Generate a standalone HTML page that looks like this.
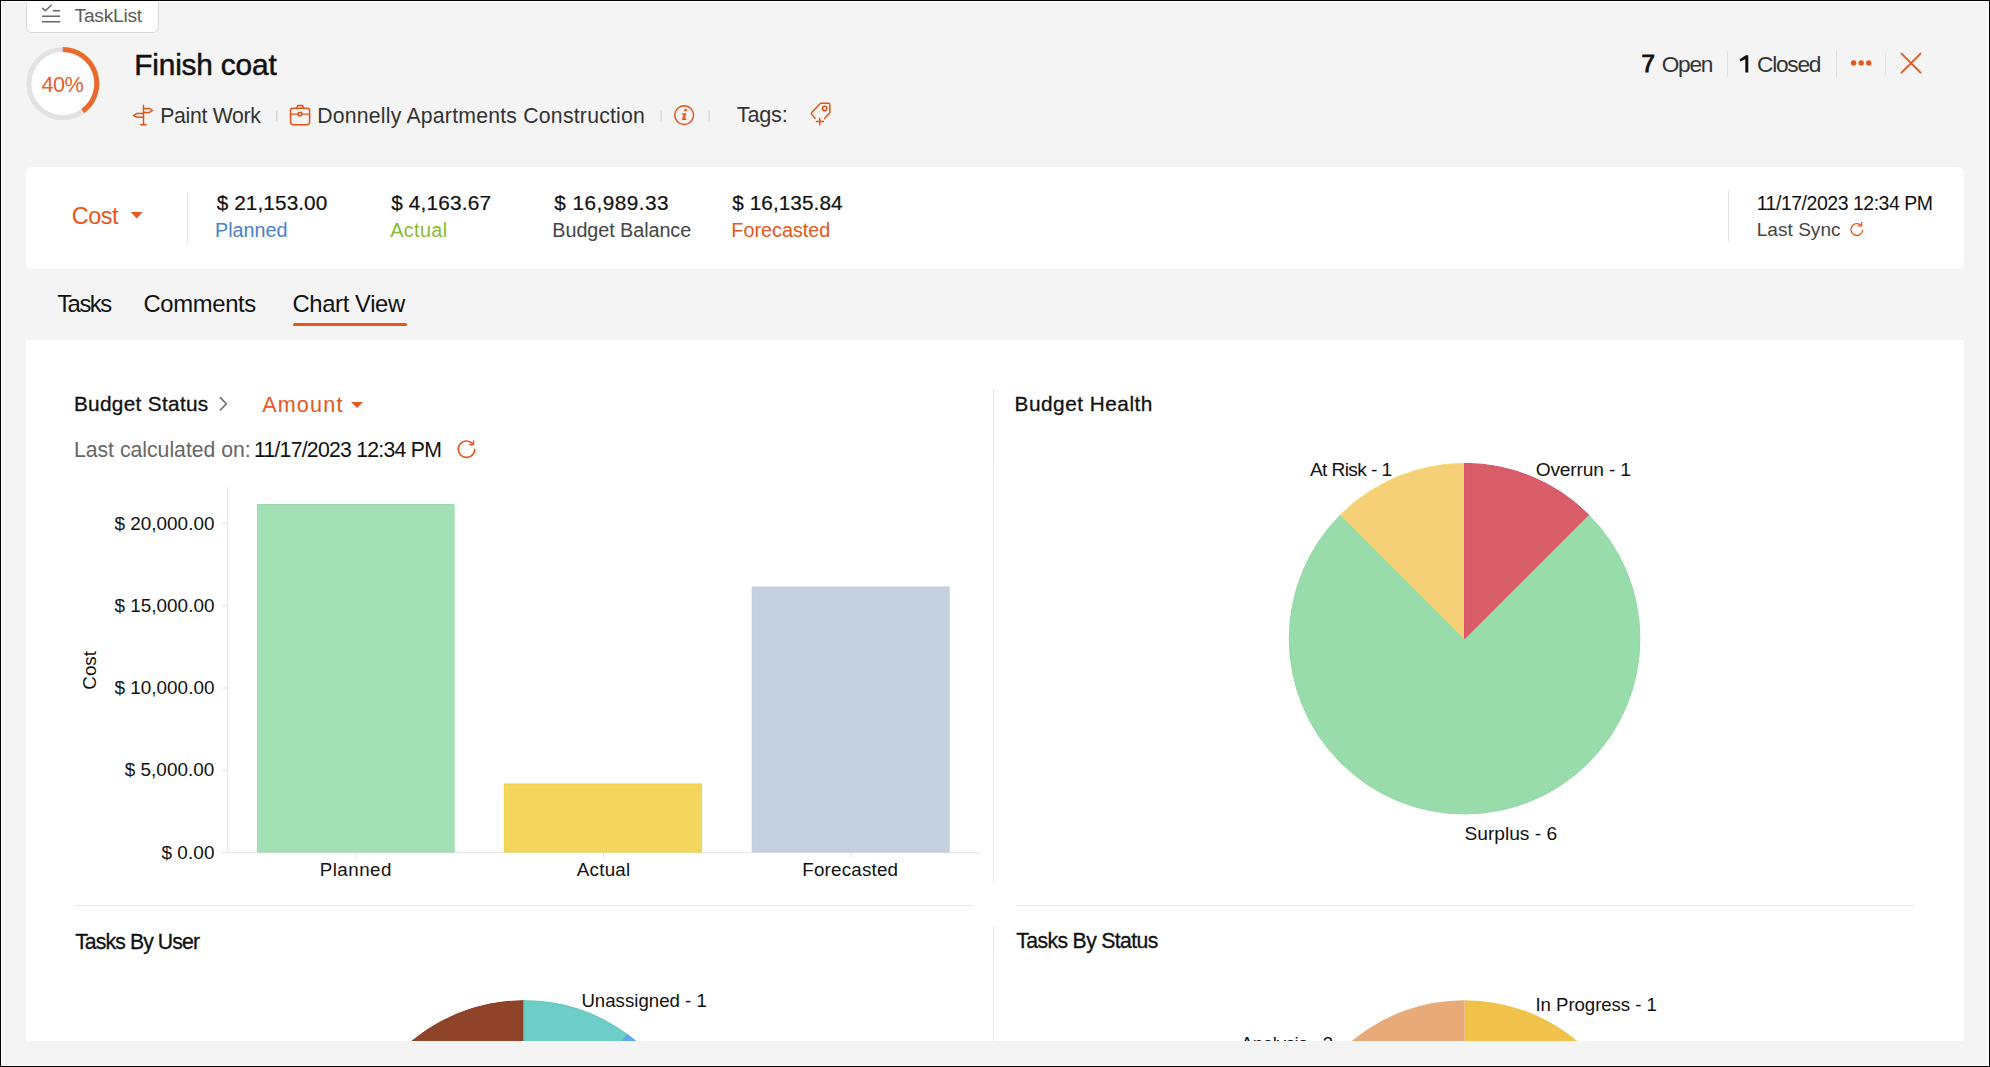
<!DOCTYPE html>
<html><head><meta charset="utf-8"><style>
html,body{margin:0;padding:0;width:1990px;height:1067px;overflow:hidden;background:#f4f4f4;}
body{position:relative;font-family:"Liberation Sans",sans-serif;}
.t{position:absolute;white-space:pre;}
.ab{position:absolute;}
</style></head><body>
<div style="position:absolute;left:26px;top:-8px;width:132.5px;height:41px;background:#fff;border:1px solid #d9d9d9;border-radius:6px;box-sizing:border-box"></div>
<svg class="ab" style="left:0;top:0" width="80" height="40"><g stroke="#666" stroke-width="1.5" fill="none" stroke-linecap="round" stroke-linejoin="round">
<path d="M42.6 8.2 L45.3 10.8 L51.3 5.2"/><path d="M53.4 10.7 H59.6"/><path d="M42.6 16.2 H59.6"/><path d="M42.6 21.8 H59.6"/></g></svg>
<div class="t" style="left:74.60px;top:6.46px;font-size:19.19px;line-height:19.19px;color:#5c5c5c;letter-spacing:-0.264px;">TaskList</div>
<svg class="ab" style="left:0;top:0" width="120" height="130">
<circle cx="62.8" cy="83.6" r="36.5" fill="#fff"/>
<circle cx="62.8" cy="83.6" r="34" fill="none" stroke="#e2e2e2" stroke-width="5"/>
<path d="M62.80 49.60 A34 34 0 0 1 82.78 111.11" fill="none" stroke="#ea6a2e" stroke-width="5"/>
</svg>
<div class="t" style="left:41.45px;top:73.77px;font-size:21.66px;line-height:21.66px;color:#e8602a;letter-spacing:-0.525px;">40%</div>
<div class="t" style="left:134.25px;top:49.88px;font-size:29.80px;line-height:29.80px;color:#111;letter-spacing:-0.165px;-webkit-text-stroke:0.5px #111;">Finish coat</div>
<svg class="ab" style="left:0;top:0" width="900" height="140"><g stroke="#e65012" stroke-width="1.45" fill="none" stroke-linecap="round" stroke-linejoin="round">
<path d="M143.5 105.3 V124.6 M140.7 124.7 H146.1"/>
<path d="M143.5 108.4 H149.4 L152.5 110.5 L149.4 112.4 H143.5"/>
<path d="M143.5 113.5 H136.7 L133.6 115.5 L136.7 117.2 H143.5"/>
<rect x="290.5" y="108.2" width="19.1" height="16.5" rx="2.6"/>
<path d="M296.7 108.2 L298 105.4 H302.5 L303.7 108.2"/>
<path d="M290.5 114.1 H298.3 M302 114.1 H309.6"/>
<rect x="298.3" y="112.4" width="3.4" height="3.3" rx="0.6"/>
<circle cx="684.2" cy="115.1" r="9.4"/>
<path d="M815.2 118.4 L811.6 114.2 Q810.9 113.3 811.7 112.4 L820.6 103.2 H828.6 Q829.9 103.4 829.9 104.8 V112.1 Q829.8 112.8 829.2 113.4 L824.5 118.4"/>
<circle cx="824.6" cy="108.5" r="2.2"/>
<path d="M819.8 118.4 V124.7 M816.4 121.5 H823.3"/>
</g>
<g fill="#e8561c"><circle cx="685.5" cy="110.2" r="1.35"/>
<path d="M682 113.2 H686.4 L684.8 118.6 H686.6 L686.2 120.1 H681.9 L683.4 114.6 H681.7 Z"/></g>
<g fill="#d2d2d2"><rect x="276" y="110.5" width="1.2" height="10.5"/><rect x="660.5" y="110.5" width="1.2" height="10.5"/><rect x="708.5" y="110.5" width="1.2" height="10.5"/></g>
</svg>
<div class="t" style="left:160.15px;top:105.14px;font-size:21.22px;line-height:21.22px;color:#333;letter-spacing:-0.294px;">Paint Work</div>
<div class="t" style="left:317.15px;top:105.14px;font-size:21.22px;line-height:21.22px;color:#333;letter-spacing:0.224px;">Donnelly Apartments Construction</div>
<div class="t" style="left:736.85px;top:103.97px;font-size:21.66px;line-height:21.66px;color:#333;letter-spacing:-0.212px;">Tags:</div>
<div class="t" style="left:1641.60px;top:52.48px;font-size:24.13px;line-height:24.13px;color:#111;letter-spacing:0.000px;-webkit-text-stroke:1.0px #111;">7</div>
<div class="t" style="left:1661.70px;top:53.31px;font-size:22.67px;line-height:22.67px;color:#333;letter-spacing:-1.267px;">Open</div>
<div class="ab" style="left:1727px;top:51px;width:1px;height:26px;background:#e0e0e0"></div>
<svg class="ab" style="left:1730px;top:50px" width="24" height="28"><path d="M15.9 5.2 H18.3 V22.6 H15.3 V9.2 L10.2 11.6 L9.6 9.2 Z" fill="#111"/></svg>
<div class="t" style="left:1757.00px;top:53.31px;font-size:22.67px;line-height:22.67px;color:#333;letter-spacing:-1.220px;">Closed</div>
<div class="ab" style="left:1836px;top:51px;width:1px;height:26px;background:#e0e0e0"></div>
<svg class="ab" style="left:1840px;top:50px" width="90" height="30">
<g fill="#e8561c"><circle cx="13.6" cy="12.9" r="2.7"/><circle cx="21.2" cy="12.9" r="2.7"/><circle cx="28.7" cy="12.9" r="2.7"/></g>
<g stroke="#e8561c" stroke-width="2" stroke-linecap="round"><path d="M61.5 3.6 L80.5 22.6 M80.5 3.6 L61.5 22.6"/></g></svg>
<div class="ab" style="left:1885px;top:53px;width:1px;height:23px;background:#e0e0e0"></div>
<div class="ab" style="left:26px;top:167px;width:1938px;height:102px;background:#fff;border-radius:6px"></div>
<div class="t" style="left:71.85px;top:204.59px;font-size:23.40px;line-height:23.40px;color:#e8561c;letter-spacing:-0.517px;">Cost</div>
<svg class="ab" style="left:128px;top:208px" width="20" height="14"><path d="M2.7 4 H14.6 L8.65 10.5 Z" fill="#e8561c"/></svg>
<div class="ab" style="left:186.5px;top:192px;width:1px;height:52px;background:#e4e4e4"></div>
<div class="t" style="left:216.75px;top:192.81px;font-size:20.78px;line-height:20.78px;color:#111;letter-spacing:0.085px;-webkit-text-stroke:0.2px #111;">$ 21,153.00</div>
<div class="t" style="left:214.95px;top:220.77px;font-size:19.77px;line-height:19.77px;color:#4a7fc6;letter-spacing:0.017px;">Planned</div>
<div class="t" style="left:391.15px;top:192.81px;font-size:20.78px;line-height:20.78px;color:#111;letter-spacing:0.194px;-webkit-text-stroke:0.2px #111;">$ 4,163.67</div>
<div class="t" style="left:390.25px;top:220.77px;font-size:19.77px;line-height:19.77px;color:#86bb38;letter-spacing:0.380px;">Actual</div>
<div class="t" style="left:554.15px;top:192.81px;font-size:20.78px;line-height:20.78px;color:#111;letter-spacing:0.465px;-webkit-text-stroke:0.2px #111;">$ 16,989.33</div>
<div class="t" style="left:552.35px;top:220.77px;font-size:19.77px;line-height:19.77px;color:#444;letter-spacing:-0.058px;">Budget Balance</div>
<div class="t" style="left:732.20px;top:192.81px;font-size:20.78px;line-height:20.78px;color:#111;letter-spacing:0.075px;-webkit-text-stroke:0.2px #111;">$ 16,135.84</div>
<div class="t" style="left:731.30px;top:220.77px;font-size:19.77px;line-height:19.77px;color:#e8561c;letter-spacing:0.011px;">Forecasted</div>
<div class="ab" style="left:1728px;top:191px;width:1px;height:50px;background:#e4e4e4"></div>
<div class="t" style="left:1756.70px;top:193.61px;font-size:19.48px;line-height:19.48px;color:#111;letter-spacing:-0.469px;">11/17/2023 12:34 PM</div>
<div class="t" style="left:1756.70px;top:219.98px;font-size:19.04px;line-height:19.04px;color:#444;letter-spacing:0.038px;">Last Sync</div>
<svg class="ab" style="left:1840px;top:216px" width="30" height="30"><g stroke="#e8561c" stroke-width="1.4" fill="none" stroke-linecap="round" stroke-linejoin="round">
<path d="M22.6 14.5 A5.9 5.9 0 1 1 21.2 9.6"/><path d="M21.6 6.4 V9.9 H18.2"/></g></svg>
<div class="t" style="left:57.20px;top:291.82px;font-size:23.84px;line-height:23.84px;color:#111;letter-spacing:-1.487px;">Tasks</div>
<div class="t" style="left:143.50px;top:291.82px;font-size:23.84px;line-height:23.84px;color:#111;letter-spacing:-0.357px;">Comments</div>
<div class="t" style="left:292.55px;top:291.82px;font-size:23.84px;line-height:23.84px;color:#111;letter-spacing:-0.389px;">Chart View</div>
<div class="ab" style="left:293px;top:323px;width:114px;height:3px;background:#e8561c;border-radius:1.5px"></div>
<div class="ab" style="left:26px;top:340px;width:1938px;height:701px;background:#fff"></div>
<div class="t" style="left:73.90px;top:394.11px;font-size:20.78px;line-height:20.78px;color:#111;letter-spacing:0.325px;-webkit-text-stroke:0.3px #111;">Budget Status</div>
<svg class="ab" style="left:210px;top:390px" width="30" height="30"><path d="M10.3 7.6 L16.4 13.8 L10.3 20" stroke="#666" stroke-width="1.5" fill="none" stroke-linecap="round" stroke-linejoin="round"/></svg>
<div class="t" style="left:262.15px;top:393.52px;font-size:21.60px;line-height:21.60px;color:#e8561c;letter-spacing:1.170px;">Amount</div>
<svg class="ab" style="left:340px;top:395px" width="30" height="20"><path d="M11 7 H23 L17 13 Z" fill="#e8561c"/></svg>
<div class="t" style="left:73.95px;top:439.34px;font-size:21.22px;line-height:21.22px;color:#666;letter-spacing:-0.008px;">Last calculated on:</div>
<div class="t" style="left:253.95px;top:439.34px;font-size:21.22px;line-height:21.22px;color:#111;letter-spacing:-0.747px;">11/17/2023 12:34 PM</div>
<svg class="ab" style="left:452px;top:436px" width="30" height="30"><g stroke="#e8561c" stroke-width="1.6" fill="none" stroke-linecap="round" stroke-linejoin="round">
<path d="M22.7 13.4 A8.2 8.2 0 1 1 20.6 7.7"/><path d="M21.5 5 V8.6 H17.9"/></g></svg>
<div class="ab" style="left:993px;top:389px;width:1px;height:76px;background:#e4e4e4"></div>
<div class="ab" style="left:993px;top:465px;width:1px;height:419px;background:#ececec"></div>
<svg class="ab" style="left:0;top:0" width="1000" height="900"><g fill="#e6e6e6"><rect x="227" y="487" width="1" height="366"/><rect x="222" y="852" width="758" height="1"/></g><rect x="222" y="852.0" width="5" height="1" fill="#e6e6e6"/><rect x="222" y="769.8" width="5" height="1" fill="#e6e6e6"/><rect x="222" y="687.5" width="5" height="1" fill="#e6e6e6"/><rect x="222" y="605.2" width="5" height="1" fill="#e6e6e6"/><rect x="222" y="523.0" width="5" height="1" fill="#e6e6e6"/><rect x="355.8" y="853" width="1" height="5" fill="#e6e6e6"/><rect x="603.0" y="853" width="1" height="5" fill="#e6e6e6"/><rect x="850.6" y="853" width="1" height="5" fill="#e6e6e6"/><rect x="257.5" y="504.53" width="196.60000000000002" height="347.47" fill="#a3e0b5" stroke="#99dcab" stroke-width="1"/><rect x="504.4" y="784.01" width="197.10000000000002" height="67.99" fill="#f5d65c" stroke="#f4cf3e" stroke-width="1"/><rect x="752.2" y="587.07" width="196.89999999999998" height="264.93" fill="#c5d1de" stroke="#bccadb" stroke-width="1"/></svg>
<div class="t" style="left:161.45px;top:843.61px;font-size:18.90px;line-height:18.90px;color:#111;letter-spacing:0.090px;">$ 0.00</div>
<div class="t" style="left:124.65px;top:761.36px;font-size:18.90px;line-height:18.90px;color:#111;letter-spacing:0.050px;">$ 5,000.00</div>
<div class="t" style="left:114.60px;top:679.11px;font-size:18.90px;line-height:18.90px;color:#111;letter-spacing:0.000px;">$ 10,000.00</div>
<div class="t" style="left:114.60px;top:596.86px;font-size:18.90px;line-height:18.90px;color:#111;letter-spacing:0.000px;">$ 15,000.00</div>
<div class="t" style="left:114.60px;top:514.61px;font-size:18.90px;line-height:18.90px;color:#111;letter-spacing:0.000px;">$ 20,000.00</div>
<div class="t" style="left:319.63px;top:860.93px;font-size:18.75px;line-height:18.75px;color:#111;letter-spacing:0.500px;">Planned</div>
<div class="t" style="left:576.75px;top:860.93px;font-size:18.75px;line-height:18.75px;color:#111;letter-spacing:0.270px;">Actual</div>
<div class="t" style="left:802.35px;top:860.93px;font-size:18.75px;line-height:18.75px;color:#111;letter-spacing:0.200px;">Forecasted</div>
<div class="t" style="left:70.70px;top:660.63px;font-size:18.75px;line-height:18.75px;color:#111;letter-spacing:0.000px;transform:rotate(-90deg);transform-origin:center;">Cost</div>
<div class="t" style="left:1014.55px;top:393.91px;font-size:20.78px;line-height:20.78px;color:#111;letter-spacing:0.521px;-webkit-text-stroke:0.3px #111;">Budget Health</div>
<svg class="ab" style="left:0;top:0" width="1990" height="1067">
<path d="M1464.60 638.70 L1588.56 514.74 A175.3 175.3 0 1 1 1340.64 514.74 Z" fill="#98dcab" stroke="#90d9a3" stroke-width="1"/>
<path d="M1464.60 638.70 L1340.64 514.74 A175.3 175.3 0 0 1 1464.60 463.40 Z" fill="#f5d077" stroke="#f8da6e" stroke-width="1"/>
<path d="M1464.60 638.70 L1464.60 463.40 A175.3 175.3 0 0 1 1588.56 514.74 Z" fill="#d95d69" stroke="#d44e64" stroke-width="1"/>
</svg>
<div class="t" style="left:1309.90px;top:459.56px;font-size:19.19px;line-height:19.19px;color:#111;letter-spacing:-0.620px;">At Risk - 1</div>
<div class="t" style="left:1535.70px;top:459.56px;font-size:19.19px;line-height:19.19px;color:#111;letter-spacing:-0.170px;">Overrun - 1</div>
<div class="t" style="left:1464.45px;top:824.06px;font-size:19.19px;line-height:19.19px;color:#111;letter-spacing:-0.005px;">Surplus - 6</div>
<div class="ab" style="left:75px;top:905px;width:898px;height:1px;background:#e4e4e4"></div>
<div class="ab" style="left:1016px;top:905px;width:898px;height:1px;background:#e4e4e4"></div>
<div class="ab" style="left:993px;top:926px;width:1px;height:30px;background:#e4e4e4"></div>
<div class="ab" style="left:993px;top:956px;width:1px;height:85px;background:#ececec"></div>
<div class="t" style="left:75.15px;top:930.54px;font-size:21.22px;line-height:21.22px;color:#111;letter-spacing:-0.896px;-webkit-text-stroke:0.3px #111;">Tasks By User</div>
<div class="t" style="left:1016.35px;top:930.34px;font-size:21.22px;line-height:21.22px;color:#111;letter-spacing:-0.643px;-webkit-text-stroke:0.3px #111;">Tasks By Status</div>
<svg class="ab" style="left:0;top:0" width="1990" height="1067">
<path d="M523.80 1176.20 L626.96 1034.22 A175.5 175.5 0 0 1 690.71 1121.97 Z" fill="#5ea5f2" stroke="#4598f0" stroke-width="1"/>
<path d="M523.80 1176.20 L523.80 1351.70 A175.5 175.5 0 0 1 523.80 1000.70 Z" fill="#8f4329" stroke="#8a3a22" stroke-width="1"/>
<path d="M523.80 1176.20 L523.80 1000.70 A175.5 175.5 0 0 1 626.96 1034.22 Z" fill="#6dcdc7" stroke="#55c5bd" stroke-width="1"/>
<path d="M1464.60 1176.20 L1464.60 1000.20 A176 176 0 0 1 1577.73 1041.38 Z" fill="#f0c24a"/>
<path d="M1464.60 1176.20 L1404.40 1341.59 A176 176 0 0 1 1464.60 1000.20 Z" fill="#e8aa78"/>
</svg>
<div class="t" style="left:581.40px;top:992.05px;font-size:18.60px;line-height:18.60px;color:#111;letter-spacing:0.031px;">Unassigned - 1</div>
<div class="t" style="left:1535.50px;top:996.45px;font-size:18.60px;line-height:18.60px;color:#111;letter-spacing:-0.043px;">In Progress - 1</div>
<div class="t" style="left:1240.80px;top:1034.55px;font-size:18.60px;line-height:18.60px;color:#111;letter-spacing:-0.336px;">Analysis - 3</div>
<div class="ab" style="left:0;top:1041px;width:1990px;height:26px;background:#f4f4f4"></div>
<div class="ab" style="left:0;top:0;width:1990px;height:1067px;box-sizing:border-box;border:1px solid #000;box-shadow:inset 0 0 0 1px #fff"></div>
</body></html>
